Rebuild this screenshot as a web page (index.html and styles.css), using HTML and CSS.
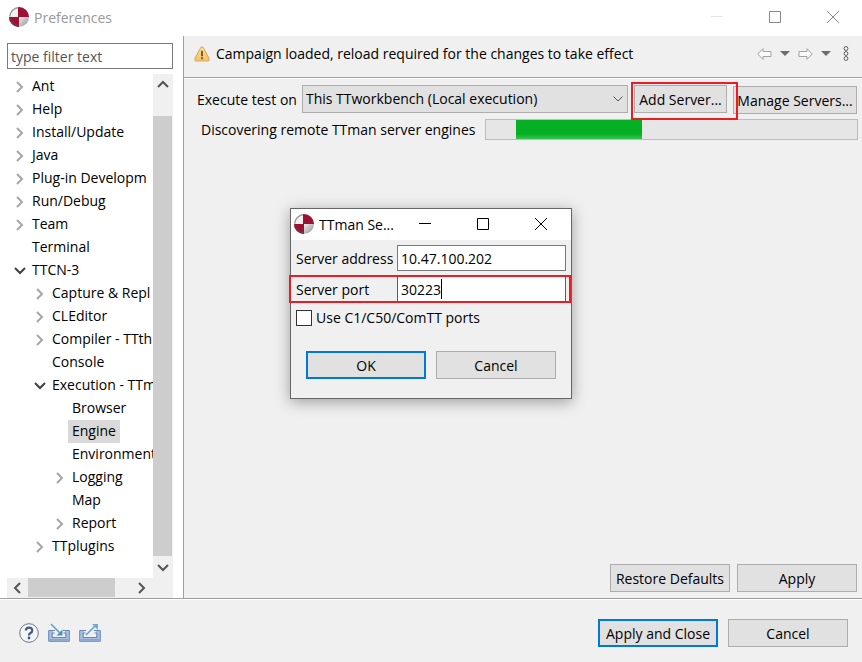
FILE: index.html
```html
<!DOCTYPE html>
<html lang="en">
<head>
<meta charset="utf-8">
<title>Preferences</title>
<link rel="stylesheet" href="styles.css">
</head>
<body>
<svg class="defs" aria-hidden="true">
  <defs>
    <linearGradient id="silver" x1="0" y1="0" x2="1" y2="1"><stop offset="0.4" stop-color="#ffffff"/><stop offset="1" stop-color="#8c8c8c"/></linearGradient>
    <linearGradient id="amber" x1="0" y1="0" x2="0" y2="1"><stop offset="0" stop-color="#fbe3a4"/><stop offset="1" stop-color="#f5c160"/></linearGradient>
    <clipPath id="ball"><circle cx="10" cy="10" r="10"/></clipPath>
    <symbol id="logo" viewBox="0 0 20 20">
      <g clip-path="url(#ball)">
        <rect width="20" height="20" fill="url(#silver)"/>
        <rect width="9.5" height="10" fill="#c9c9cb"/>
        <path d="M2 10V5l4-3h3v8z" fill="#f1f1f1"/>
        <path d="M9 0h11v10H9zM0 10h10v10H0z" fill="#9d1233"/>
        <path d="M0 10v10h10v-2Q3 17 0 10z" fill="#7e3145"/>
        <path d="M1 0h8v1Q3 3 1 9H0z" fill="#9b9b9f"/>
      </g>
    </symbol>
    <symbol id="right" viewBox="0 0 8 12"><path d="M1 1l5 5-5 5" fill="none" stroke="currentColor" stroke-width="2"/></symbol>
    <symbol id="down" viewBox="0 0 12 8"><path d="M1 1l5 5 5-5" fill="none" stroke="currentColor" stroke-width="2"/></symbol>
    <symbol id="min" viewBox="0 0 12 12"><path d="M0 5.5h12" stroke="currentColor"/></symbol>
    <symbol id="max" viewBox="0 0 12 12"><path d="M.5.5h11v11H.5z" fill="none" stroke="currentColor"/></symbol>
    <symbol id="close" viewBox="0 0 12 12"><path d="M0 0l12 12M12 0L0 12" stroke="currentColor"/></symbol>
    <symbol id="tray" viewBox="0 0 22 13"><path d="M1 1h4v7h12V1h4v11H1z" fill="#a9bfe2"/><path d="M7 1.500H.700v10.800h20.600V1.500H15M6.500 4H4v4.500h14V4h-2.500" fill="none" stroke="#6685b8"/><path d="M1.500 10.800h19" stroke="#86a2d2" stroke-width="1.500"/></symbol>
  </defs>
</svg>

<div class="window">
  <header class="titlebar">
    <svg class="logo"><use href="#logo"/></svg>
    <h1>Preferences</h1>
    <div class="controls">
      <button class="faint" aria-label="Minimize"><svg><use href="#min"/></svg></button>
      <button aria-label="Maximize"><svg><use href="#max"/></svg></button>
      <button aria-label="Close"><svg><use href="#close"/></svg></button>
    </div>
  </header>

  <main>
    <aside>
      <input class="filter" type="text" placeholder="type filter text" aria-label="type filter text">
      <div class="tree-area">
        <ul class="tree">
          <li><svg class="right"><use href="#right"/></svg><span>Ant</span></li>
          <li><svg class="right"><use href="#right"/></svg><span>Help</span></li>
          <li><svg class="right"><use href="#right"/></svg><span>Install/Update</span></li>
          <li><svg class="right"><use href="#right"/></svg><span>Java</span></li>
          <li><svg class="right"><use href="#right"/></svg><span>Plug-in Developm</span></li>
          <li><svg class="right"><use href="#right"/></svg><span>Run/Debug</span></li>
          <li><svg class="right"><use href="#right"/></svg><span>Team</span></li>
          <li class="leaf"><span>Terminal</span></li>
          <li><svg class="down"><use href="#down"/></svg><span>TTCN-3</span></li>
          <li class="l2"><svg class="right"><use href="#right"/></svg><span>Capture &amp; Repl</span></li>
          <li class="l2"><svg class="right"><use href="#right"/></svg><span>CLEditor</span></li>
          <li class="l2"><svg class="right"><use href="#right"/></svg><span>Compiler - TTth</span></li>
          <li class="l2 leaf"><span>Console</span></li>
          <li class="l2"><svg class="down"><use href="#down"/></svg><span>Execution - TTm</span></li>
          <li class="l3 leaf"><span>Browser</span></li>
          <li class="l3 leaf"><span class="selected">Engine</span></li>
          <li class="l3 leaf"><span>Environment</span></li>
          <li class="l3"><svg class="right"><use href="#right"/></svg><span>Logging</span></li>
          <li class="l3 leaf"><span>Map</span></li>
          <li class="l3"><svg class="right"><use href="#right"/></svg><span>Report</span></li>
          <li class="l2"><svg class="right"><use href="#right"/></svg><span>TTplugins</span></li>
        </ul>
        <div class="vscroll">
          <button aria-label="Scroll up"><svg class="up"><use href="#down"/></svg></button>
          <div class="thumb"></div>
          <button aria-label="Scroll down"><svg><use href="#down"/></svg></button>
        </div>
      </div>
      <div class="hscroll">
        <button aria-label="Scroll left"><svg class="left"><use href="#right"/></svg></button>
        <div class="track"><div class="thumb"></div></div>
        <button aria-label="Scroll right"><svg><use href="#right"/></svg></button>
      </div>
    </aside>

    <section class="page">
      <div class="message">
        <svg class="warn" viewBox="0 0 15 15"><path d="M7.500 1Q8.500 1 9 2l5 9.500Q14.500 14 13 14H2Q.5 14 1 11.500L6 2Q6.500 1 7.500 1z" fill="url(#amber)" stroke="#d9a866"/><path d="M7.500 4.500v5M7.500 10.500v2" stroke="#704a1c" stroke-width="1.600"/></svg>
        <p>Campaign loaded, reload required for the changes to take effect</p>
        <div class="nav">
          <button aria-label="Back"><svg class="arrow" viewBox="0 0 15 12"><path d="M.7 6L6 .7V3.500h8v5H6v2.800z" fill="#fafafa" stroke="#a2a2a2"/></svg></button>
          <button aria-label="Back history"><svg class="caret-down" viewBox="0 0 10 5"><path d="M0 0h10L5 5z" fill="#6c6c6c"/></svg></button>
          <button aria-label="Forward"><svg class="arrow flip" viewBox="0 0 15 12"><path d="M.7 6L6 .7V3.500h8v5H6v2.800z" fill="#fafafa" stroke="#a2a2a2"/></svg></button>
          <button aria-label="Forward history"><svg class="caret-down" viewBox="0 0 10 5"><path d="M0 0h10L5 5z" fill="#6c6c6c"/></svg></button>
          <button aria-label="View menu"><svg class="dots" viewBox="0 0 6 15"><g fill="#fff" stroke="#555"><circle cx="3" cy="2.500" r="1.900"/><circle cx="3" cy="7.500" r="1.900"/><circle cx="3" cy="12.500" r="1.900"/></g></svg></button>
        </div>
      </div>
      <div class="row execute">
        <label for="target">Execute test on</label>
        <div class="select">
          <select id="target"><option>This TTworkbench (Local execution)</option></select>
          <svg viewBox="0 0 10 6"><path d="M.5.5L5 5 9.500.5" fill="none" stroke="#555"/></svg>
        </div>
        <div class="add"><button class="btn">Add Server...</button></div>
        <button class="btn manage">Manage Servers...</button>
      </div>
      <div class="row discover">
        <span id="discover">Discovering remote TTman server engines</span>
        <div class="progress" role="progressbar" aria-labelledby="discover"><div class="chunk"></div></div>
      </div>
      <div class="page-actions">
        <button class="btn wide">Restore Defaults</button>
        <button class="btn wide">Apply</button>
      </div>
    </section>
  </main>

  <footer>
    <button class="tool" aria-label="Help"><svg class="help" viewBox="0 0 20 20"><circle cx="10" cy="10" r="9.300" fill="#f5f6f8" stroke="#66748f"/><path d="M6.800 7.500Q7 4.700 10.100 4.700T13.200 7.400Q13.200 9 11.500 10T10 12.500" fill="none" stroke="#46597f" stroke-width="2.200"/><circle cx="10" cy="15" r="1.400" fill="#46597f"/></svg></button>
    <button class="tool" aria-label="Import"><svg class="port" viewBox="0 0 22 19"><use href="#tray" y="6" width="22" height="13"/><path d="M3 1l10 10" stroke="#58a0cc" stroke-width="1.500"/><path d="M14.500 6.500v6h-6z" fill="#4d91c0"/></svg></button>
    <button class="tool" aria-label="Export"><svg class="port" viewBox="0 0 22 19"><use href="#tray" y="6" width="22" height="13"/><path d="M7 12L17 2" stroke="#58a0cc" stroke-width="1.500"/><path d="M13 1h6v6z" fill="#76abd0"/></svg></button>
    <div class="footer-actions">
      <button class="btn wide primary">Apply and Close</button>
      <button class="btn wide">Cancel</button>
    </div>
  </footer>

  <form class="dialog" role="dialog" aria-labelledby="dialog-title">
    <header>
      <svg class="logo"><use href="#logo"/></svg>
      <h2 id="dialog-title">TTman Se...</h2>
      <div class="controls">
        <button type="button" aria-label="Minimize"><svg><use href="#min"/></svg></button>
        <button type="button" aria-label="Maximize"><svg><use href="#max"/></svg></button>
        <button type="button" aria-label="Close"><svg><use href="#close"/></svg></button>
      </div>
    </header>
    <div class="field">
      <label for="address">Server address</label>
      <input id="address" type="text" value="10.47.100.202">
    </div>
    <div class="field marked">
      <label for="port">Server port</label>
      <input id="port" type="text" value="30223">
      <i class="text-caret"></i>
    </div>
    <div class="check">
      <input id="ports" type="checkbox">
      <label for="ports">Use C1/C50/ComTT ports</label>
    </div>
    <div class="dialog-actions">
      <button type="button" class="btn wide primary">OK</button>
      <button type="button" class="btn wide">Cancel</button>
    </div>
  </form>
</div>
</body>
</html>
```
FILE: styles.css
```css
* { box-sizing: border-box; }
body, h1, h2, p, ul { margin: 0; padding: 0; }
body, button, input, select {
  font: 14px/20px "Open Sans", "Noto Sans", sans-serif;
  color: #000;
}
button { margin: 0; padding: 0; border: 0; background: none; }
svg { display: block; }
.defs { position: absolute; width: 0; height: 0; }

.window {
  position: relative;
  display: flex;
  flex-direction: column;
  min-height: 100vh;
  background: #f0f0f0;
}

/* Title bars */
.titlebar, .dialog header { display: flex; align-items: center; background: #fff; }
.titlebar { height: 36px; padding: 0 0 2px 9px; }
.logo { flex: none; width: 20px; height: 20px; }
h1, h2 { font-size: 14px; font-weight: 400; white-space: nowrap; }
h1 { margin-left: 5px; padding-top: 2px; color: #999; }
.controls { display: flex; margin-left: auto; color: #888; }
.controls button { display: grid; place-items: center; width: 58px; height: 30px; color: inherit; }
.controls svg { width: 12px; height: 12px; }
.controls .faint { color: #e4e4e4; }

main { flex: 1; display: flex; }

/* Preference tree */
aside {
  display: flex;
  flex-direction: column;
  flex: none;
  width: 184px;
  padding: 7px 10px 0 7px;
  background: #fff;
  border-right: 1px solid #a0a0a0;
}
.filter {
  width: 166px;
  height: 26px;
  margin-bottom: 5px;
  padding: 0 3px;
  border: 1px solid #7a7a7a;
  border-radius: 0;
  background: #fff;
}
.filter::placeholder { color: #555; opacity: 1; }
.tree-area { flex: 1; display: flex; width: 166px; }
.tree { flex: 1; min-width: 0; padding-top: 1px; overflow: hidden; list-style: none; }
.tree li { display: flex; align-items: center; height: 23px; padding-left: 6px; white-space: nowrap; }
.tree svg { flex: none; width: 14px; height: 12px; color: #a6a6a6; }
.tree svg.down { height: 8px; color: #404040; }
.tree span { padding: 1px 4px 2px; margin-left: 1px; }
.tree .leaf { padding-left: 20px; }
.tree .l2 { padding-left: 26px; }
.tree .l2.leaf { padding-left: 40px; }
.tree .l3 { padding-left: 46px; }
.tree .l3.leaf { padding-left: 60px; }
.tree .selected { background: #d9d9d9; }

.vscroll { display: flex; flex-direction: column; flex: none; width: 20px; background: #f0f0f0; }
.vscroll button, .hscroll button { display: grid; place-items: center; flex: none; width: 20px; height: 20px; color: #555; }
.vscroll .thumb { flex: 1; width: 19px; margin: 22px 0 2px; background: #cdcdcd; }
.vscroll svg { width: 12px; height: 8px; }
.vscroll button { width: 19px; }
.up, .left, .flip { transform: rotate(180deg); }
.hscroll { display: flex; width: 166px; height: 20px; background: #f0f0f0; }
.hscroll svg { width: 8px; height: 12px; }
.hscroll .track { flex: 1; padding-left: 1px; }
.hscroll .thumb { width: 84%; height: 19px; background: #cdcdcd; }
.hscroll button:last-child { margin-right: 21px; }

/* Engine page */
.page { display: flex; flex-direction: column; flex: 1; min-width: 0; padding-bottom: 6px; }
.message {
  display: flex;
  align-items: center;
  height: 42px;
  padding: 0 13px 6px 10px;
  border-bottom: 1px solid #a0a0a0;
  box-shadow: 0 1px #fff;
}
.warn { width: 16px; height: 16px; margin-right: 6px; }
.nav { display: flex; align-items: center; gap: 8px; margin-left: auto; }
.arrow { width: 15px; height: 12px; }
.caret-down { width: 10px; height: 5px; }
.dots { width: 6px; height: 15px; margin-left: 4px; }

.btn {
  height: 28px;
  padding: 2px 0 0;
  border: 1px solid #adadad;
  background: #e1e1e1;
  white-space: nowrap;
}
.wide { width: 120px; }
.primary { border: 2px solid #0078d7; }

.row { display: flex; align-items: center; }
.execute { height: 41px; margin-top: 1px; padding: 0 5px 0 13px; }
.select { position: relative; flex: 1; margin: 0 3px 2px 5px; }
.select select {
  display: block;
  width: 100%;
  height: 28px;
  padding: 0 3px;
  border: 1px solid #adadad;
  border-radius: 0;
  background: #e1e1e1;
  appearance: none;
}
.select svg { position: absolute; right: 5px; top: 11px; width: 10px; height: 6px; pointer-events: none; }
.add {
  z-index: 1;
  width: 107px;
  height: 38px;
  margin: 2px -5px 0 0;
  padding: 1px;
  border: 2px solid #ed1c24;
}
.add .btn { width: 93px; }
.manage { width: 124px; }
.discover { height: 20px; margin-top: -1px; padding: 0 4px 0 17px; }
.discover span { padding-top: 2px; }
.progress {
  flex: 1;
  height: 21px;
  margin-left: 10px;
  border: 1px solid #bcbcbc;
  background: #e6e6e6;
}
.chunk {
  width: 34%;
  height: 100%;
  margin-left: 8%;
  background: linear-gradient(#06b025 75%, #3cc158);
}
.page-actions { display: flex; justify-content: flex-end; gap: 7px; margin-top: auto; padding-right: 5px; }

footer {
  display: flex;
  align-items: center;
  height: 64px;
  padding: 4px 14px 0 19px;
  border-top: 1px solid #a0a0a0;
  box-shadow: inset 0 1px #fff;
}
.help { width: 20px; height: 20px; }
.port { width: 22px; height: 19px; }
.tool + .tool { margin-left: 9px; }
.footer-actions { display: flex; gap: 10px; margin-left: auto; }

/* Server dialog */
.dialog {
  position: absolute;
  z-index: 2;
  top: 208px;
  left: calc(50% - 141px);
  width: 282px;
  padding-bottom: 19px;
  border: 1px solid #666;
  background: #f0f0f0;
  box-shadow: 0 3px 14px rgba(0, 0, 0, .35);
}
.dialog header { height: 31px; padding: 0 1px 1px 3px; }
.dialog h2 { margin-left: 5px; padding-top: 1px; }
.dialog .controls { color: #000; }
.field { display: flex; align-items: center; margin-top: 5px; padding: 0 5px; }
.field label { flex: none; width: 101px; padding-top: 2px; white-space: nowrap; }
.field input {
  flex: 1;
  min-width: 0;
  height: 26px;
  padding: 0 3px;
  border: 1px solid #7a7a7a;
  border-radius: 0;
  background: #fff;
}
.marked { position: relative; margin: 4px 0 0 -2px; border: 2px solid #ed1c24; padding: 0 3px 0 5px; }
.marked input { height: 24px; border-width: 0 1px; border-color: #0078d7; outline: 0; }
.text-caret { position: absolute; left: 150px; top: 2px; width: 1px; height: 20px; background: #000; }
.check { display: flex; align-items: center; gap: 4px; margin-top: 4px; padding: 0 5px; }
.check label { padding-top: 1px; }
.check input { width: 16px; height: 16px; margin: 0; border: 1px solid #333; background: #fff; appearance: none; }
.dialog-actions { display: flex; justify-content: center; gap: 10px; margin-top: 23px; }
```
